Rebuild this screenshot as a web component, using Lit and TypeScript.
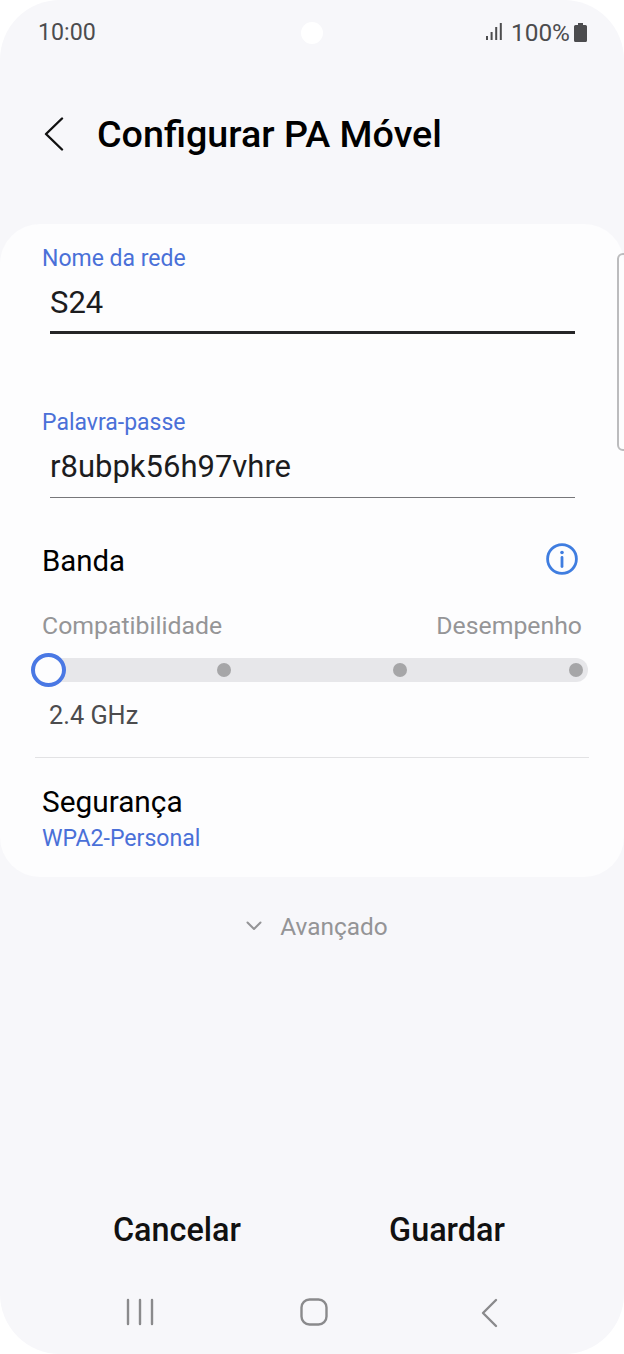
import { LitElement, html, css } from 'lit';
import { customElement } from 'lit/decorators.js';

@customElement('app-root')
export class AppRoot extends LitElement {
  static override styles = css`
    :host {
      display: block;
      width: 624px;
      height: 1354px;
      background: #fff;
      font-family: Roboto, "Noto Sans", sans-serif;
      color: #000;
    }
    .screen {
      position: relative;
      display: flex;
      flex-direction: column;
      height: 100%;
      box-sizing: border-box;
      background: #f7f7fa;
      border-radius: 60px;
      overflow: hidden;
    }
    .status {
      height: 64px;
      display: flex;
      align-items: center;
      justify-content: space-between;
      padding: 0 37px 0 38px;
      box-sizing: border-box;
      font-size: 23.200px;
      color: #4c4c4e;
    }
    .status-right {
      display: flex;
      align-items: center;
    }
    .signal {
      margin-right: 9px;
    }
    .battery {
      margin-left: 4px;
    }
    .percent {
      font-size: 24.400px;
    }
    .camera {
      position: absolute;
      left: 301px;
      top: 22px;
      width: 22px;
      height: 22px;
      border-radius: 50%;
      background: #fff;
    }
    .header {
      height: 160px;
      display: flex;
      align-items: center;
      padding: 0 0 20px 44px;
      box-sizing: border-box;
      gap: 33px;
    }
    .title {
      font-size: 37.700px;
      font-weight: 500;
      line-height: 42px;
    }
    .card {
      height: 653px;
      box-sizing: border-box;
      background: #fdfdfe;
      border-radius: 40px;
      padding-top: 21px;
      display: flex;
      flex-direction: column;
    }
    .field {
      padding: 0 49px 0 42px;
      display: flex;
      flex-direction: column;
    }
    .label {
      font-size: 23px;
      line-height: 28px;
      color: #4a70d8;
    }
    .value {
      margin: 8px 0 0 8px;
      font-size: 31px;
      line-height: 44px;
      color: #1c1c1e;
    }
    .line {
      margin-left: 8px;
      margin-top: 6px;
      height: 3px;
      background: #252527;
    }
    .line.thin {
      height: 1px;
      margin-top: 8px;
      background: #77777a;
    }
    .second {
      margin-top: 75px;
    }
    .band {
      margin-top: 36px;
      padding: 0 46px 0 42px;
      display: flex;
      align-items: center;
      justify-content: space-between;
      height: 50px;
      font-size: 29.400px;
    }
    .band span {
      margin-top: 4px;
    }
    .ends {
      margin-top: 27px;
      padding: 0 42px;
      display: flex;
      justify-content: space-between;
      font-size: 24.800px;
      line-height: 30px;
      color: #959597;
    }
    .track-wrap {
      margin: 12px 36px 0 32px;
      height: 34px;
      position: relative;
      display: flex;
      align-items: center;
    }
    .track {
      flex: 1;
      height: 24px;
      margin-left: 4px;
      border-radius: 12px;
      background: #e7e7ea;
      display: flex;
      align-items: center;
      justify-content: space-between;
      padding: 0 5px;
    }
    .dot {
      width: 14px;
      height: 14px;
      border-radius: 50%;
      background: #a6a6a8;
    }
    .dot.hidden {
      visibility: hidden;
    }
    .thumb {
      position: absolute;
      left: -1px;
      top: 0;
      width: 35px;
      height: 34px;
      box-sizing: border-box;
      border: 4px solid #4a78e4;
      border-radius: 50%;
      background: #fdfdfe;
    }
    .freq {
      margin: 14px 0 0 49px;
      font-size: 25.300px;
      line-height: 30px;
      color: #4c4c4e;
    }
    .divider {
      margin: 26px 35px 0;
      height: 1px;
      background: #e2e2e4;
    }
    .security {
      padding: 26px 42px 0;
    }
    .security-name {
      font-size: 29.800px;
      line-height: 36px;
    }
    .security-value {
      margin-top: 4px;
      font-size: 23.100px;
      line-height: 30px;
      color: #4a70d8;
    }
    .advanced {
      margin-top: 32px;
      height: 34px;
      display: flex;
      align-items: center;
      justify-content: center;
      gap: 18px;
      padding-left: 10px;
      font-size: 24.400px;
      color: #949496;
    }
    .actions {
      margin-top: auto;
      display: flex;
      height: 40px;
      padding: 0 42px;
      align-items: center;
      font-size: 32.400px;
      font-weight: 500;
      color: #111;
    }
    .actions span {
      flex: 1;
      text-align: center;
    }
    .nav {
      height: 104px;
      display: flex;
      align-items: flex-start;
      padding: 48px 0 0 126px;
      box-sizing: border-box;
    }
    .home {
      margin-left: 146px;
    }
    .back {
      margin-left: 152px;
    }
    .scrollbar {
      position: absolute;
      left: 617px;
      top: 253px;
      width: 12px;
      height: 198px;
      box-sizing: border-box;
      border: 2px solid #bcbcbe;
      border-radius: 8px;
    }
    svg {
      display: block;
      flex: none;
    }
  `;

  override render() {
    return html`
      <div class="screen">
        <div class="camera"></div>
        <div class="status">
          <span>10:00</span>
          <div class="status-right">
            <svg class="signal" width="16" height="18" viewBox="0 0 16 18" fill="#4c4c4e">
              <rect x="0" y="13" width="2" height="4"></rect>
              <rect x="4.600" y="9" width="2" height="8"></rect>
              <rect x="9.200" y="4" width="2" height="13"></rect>
              <rect x="13.800" y="0" width="2" height="17"></rect>
            </svg>
            <span class="percent">100%</span>
            <svg class="battery" width="13" height="19" viewBox="0 0 13 19" fill="#4c4c4e">
              <path d="M4 0h5v2h2.500q1.500 0 1.500 1.500V17.500q0 1.500-1.500 1.500H1.500Q0 19 0 17.500V3.500Q0 2 1.500 2H4z"></path>
            </svg>
          </div>
        </div>
        <div class="header">
          <svg width="20" height="34" viewBox="0 0 20 34" fill="none" stroke="#111" stroke-width="2.400" stroke-linecap="round" stroke-linejoin="round">
            <path d="M18 1.500 2 17l16 15.500"></path>
          </svg>
          <span class="title">Configurar PA Móvel</span>
        </div>
        <div class="card">
          <div class="field">
            <span class="label">Nome da rede</span>
            <span class="value">S24</span>
            <div class="line"></div>
          </div>
          <div class="field second">
            <span class="label">Palavra-passe</span>
            <span class="value">r8ubpk56h97vhre</span>
            <div class="line thin"></div>
          </div>
          <div class="band">
            <span>Banda</span>
            <svg width="32" height="32" viewBox="0 0 32 32" fill="none" stroke="#3f7de0" stroke-width="2.800" stroke-linecap="round">
              <circle cx="16" cy="16" r="14.400"></circle>
              <path d="M16 14.500V23.500"></path>
              <circle cx="16" cy="9.500" r="1.800" fill="#3f7de0" stroke="none"></circle>
            </svg>
          </div>
          <div class="ends">
            <span>Compatibilidade</span>
            <span>Desempenho</span>
          </div>
          <div class="track-wrap">
            <div class="track">
              <i class="dot hidden"></i>
              <i class="dot"></i>
              <i class="dot"></i>
              <i class="dot"></i>
            </div>
            <div class="thumb"></div>
          </div>
          <div class="freq">2.4 GHz</div>
          <div class="divider"></div>
          <div class="security">
            <div class="security-name">Segurança</div>
            <div class="security-value">WPA2-Personal</div>
          </div>
        </div>
        <div class="advanced">
          <svg width="16" height="10" viewBox="0 0 16 10" fill="none" stroke="#949496" stroke-width="2" stroke-linecap="round" stroke-linejoin="round">
            <path d="M1.500 1.500 8 8l6.500-6.500"></path>
          </svg>
          <span>Avançado</span>
        </div>
        <div class="actions">
          <span>Cancelar</span>
          <span>Guardar</span>
        </div>
        <div class="nav">
          <svg width="28" height="28" viewBox="0 0 28 28" fill="none" stroke="#8a8a8c" stroke-width="2.400" stroke-linecap="round">
            <path d="M2 2v24M14 2v24M26 2v24"></path>
          </svg>
          <svg class="home" width="28" height="28" viewBox="0 0 28 28" fill="none" stroke="#8a8a8c" stroke-width="2.400">
            <rect x="1.500" y="1.500" width="25" height="25" rx="8"></rect>
          </svg>
          <svg class="back" width="18" height="30" viewBox="0 0 18 30" fill="none" stroke="#8a8a8c" stroke-width="2.400" stroke-linecap="round" stroke-linejoin="round">
            <path d="M16 2 3 15l13 13"></path>
          </svg>
        </div>
        <div class="scrollbar"></div>
      </div>
    `;
  }
}
